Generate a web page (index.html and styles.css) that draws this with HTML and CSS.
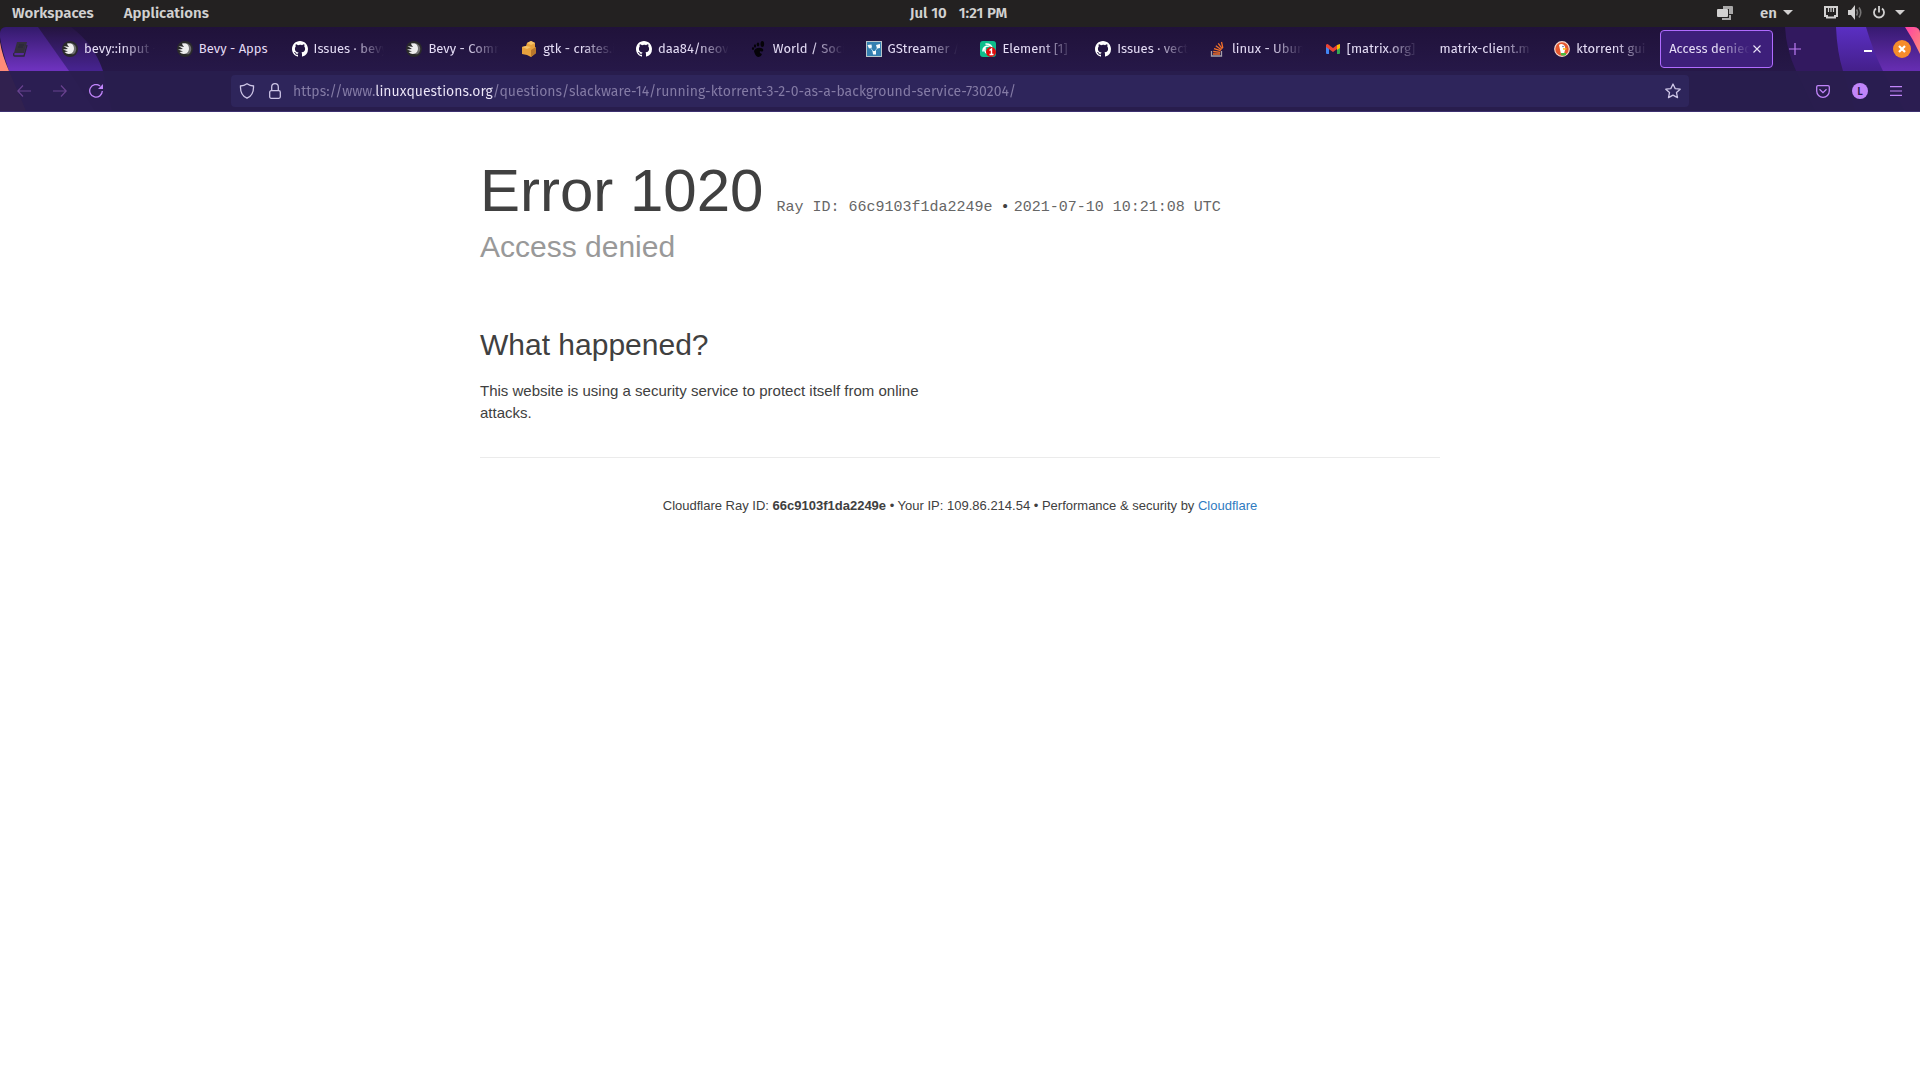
FILE: index.html
```html
<!DOCTYPE html>
<html lang="en">
<head>
<meta charset="utf-8">
<title>Access denied</title>
<link rel="stylesheet" href="styles.css">
</head>
<body>
<div class="shell">
<header class="panel">
  <nav class="panel-start">
    <button class="panel-button">Workspaces</button>
    <button class="panel-button">Applications</button>
  </nav>
  <time class="clock" datetime="2021-07-10T13:21"><span>Jul 10</span><span>1:21 PM</span></time>
  <div class="panel-end">
    <button class="panel-button" aria-label="Tiling">
      <svg width="16" height="14" viewBox="0 0 16 14"><path d="M6 0h9q1 0 1 1v7h-4V3H6zM12 9h2v5H5v-2h7z" fill="#a9a8a8"/><rect x="0" y="3" width="11" height="8" rx="1" fill="#d2d1d1"/></svg>
    </button>
    <button class="panel-button language">en
      <svg width="10" height="6" viewBox="0 0 10 6"><path d="M0 0h10L5 5z" fill="#d2d1d1"/></svg>
    </button>
    <button class="panel-button status" aria-label="System menu">
      <svg width="14" height="13" viewBox="0 0 14 13" fill="none" stroke="#d2d1d1"><path d="M1 1h12v9h-2v1.500H3V10H1z" stroke-width="2"/><path d="M4.500 2v4M7 2v4M9.500 2v4" stroke-width="1.200"/></svg>
      <svg width="15" height="15" viewBox="0 0 15 15"><path d="M0 5h3l4-5v15l-4-5H0z" fill="#d2d1d1"/><path d="M8.500 4.500q2 3 0 6M11 2.500q3.500 5 0 10" fill="none" stroke="#777676" stroke-width="1.600"/></svg>
      <svg width="12" height="13" viewBox="0 0 12 13" fill="none" stroke="#d2d1d1" stroke-width="1.800"><path d="M6 0v6.500M3 2.500a5 5 0 1 0 6 0"/></svg>
      <svg width="10" height="6" viewBox="0 0 10 6"><path d="M0 0h10L5 5z" fill="#d2d1d1"/></svg>
    </button>
  </div>
</header>

<svg class="symbols" aria-hidden="true">
  <symbol id="bevy" viewBox="0 0 16 16"><circle cx="8" cy="8" r="8" fill="#2a2a2b"/><path d="M8 2q4 0 6 4 1 4-2 7-3 1-4-1z" fill="#6f6f70"/><path d="M5 2.500Q10 1.500 11.500 5q1.500 4-1.500 7-4 2.500-7.500-1l3.500-.5-5-2 5-.5-4.500-3L7 6 5.500 4z" fill="#eee"/></symbol>
  <symbol id="github" viewBox="0 0 16 16"><path fill="#fff" d="M8 0C3.580 0 0 3.580 0 8c0 3.540 2.290 6.530 5.470 7.590.4.070.55-.17.55-.38 0-.19-.01-.82-.01-1.490-2.010.37-2.530-.49-2.690-.94-.09-.23-.48-.94-.82-1.130-.28-.15-.68-.52-.01-.53.63-.01 1.080.58 1.230.82.72 1.210 1.870.87 2.330.66.070-.52.28-.87.51-1.070-1.780-.2-3.640-.89-3.640-3.950 0-.87.31-1.590.82-2.150-.08-.2-.36-1.020.08-2.120 0 0 .67-.21 2.200.82A7.600 7.600 0 0 1 8 3.860c.68 0 1.360.09 2 .27 1.530-1.040 2.200-.82 2.200-.82.44 1.100.16 1.920.08 2.120.51.56.82 1.270.82 2.150 0 3.070-1.870 3.750-3.650 3.950.29.25.54.73.54 1.480 0 1.070-.01 1.930-.01 2.200 0 .21.15.46.55.38A8 8 0 0 0 16 8c0-4.420-3.580-8-8-8z"/></symbol>
</svg>

<div class="browser">
  <svg class="theme theme-left" width="140" height="84" viewBox="0 0 140 84" aria-hidden="true">
    <defs>
      <linearGradient id="l1" x1="0" y1="0" x2="0" y2="1"><stop offset="0" stop-color="#331a6b"/><stop offset=".5" stop-color="#6d32bd"/><stop offset="1" stop-color="#6d32bd"/></linearGradient>
      <linearGradient id="l2" x1="0" y1="0" x2="0" y2="1"><stop offset="0" stop-color="#24143f"/><stop offset=".5" stop-color="#46238e"/><stop offset="1" stop-color="#46238e"/></linearGradient>
    </defs>
    <path d="M71 0Q94 17 103 44L112 84H40L0 0z" fill="url(#l2)"/>
    <path d="M0 0H38L69 44 95 84H26L9 44Q2 24 0 10z" fill="url(#l1)"/>
    <path d="M0 15Q2 28 9 44L26 84H0z" fill="#ff8b78"/>
  </svg>
  <svg class="theme theme-right" width="150" height="84" viewBox="0 0 150 84" aria-hidden="true">
    <defs>
      <linearGradient id="r1" x1="0" y1="0" x2="0" y2="1"><stop offset="0" stop-color="#5a2fc3"/><stop offset=".5" stop-color="#45208d"/></linearGradient>
      <linearGradient id="r2" x1="0" y1="0" x2="0" y2="1"><stop offset="0" stop-color="#371a70"/><stop offset=".5" stop-color="#652db0"/></linearGradient>
      <linearGradient id="r3" x1="0" y1="0" x2="1" y2="1"><stop offset="0" stop-color="#ff3fa4"/><stop offset="1" stop-color="#ff8b78"/></linearGradient>
    </defs>
    <path d="M15 0Q16 22 26 44L45 84H150V0z" fill="#32195f"/>
    <path d="M66 0Q67 25 73 44L85 84H150V0z" fill="url(#r1)"/>
    <path d="M96 0Q103 24 113 44L135 84H150V0z" fill="url(#r2)"/>
    <path d="M135 0h15v27Q143 12 135 0z" fill="url(#r3)"/>
  </svg>

  <div class="tabbar">
    <button class="pinned" aria-label="Pinned tab"><svg width="16" height="16" viewBox="0 0 16 16"><path d="M5 1h10l-3 11H2z" fill="#332f3c"/><path d="M2 12q-1 3 1 3h9l3-11M7 4h5M6 6h5" fill="none" stroke="#2b2838" stroke-width="1.300"/></svg></button>
    <div class="tabs">
      <button class="tab"><svg class="favicon"><use href="#bevy"/></svg><span class="label fade">bevy::input -</span></button>
      <button class="tab"><svg class="favicon"><use href="#bevy"/></svg><span class="label">Bevy - Apps</span></button>
      <button class="tab"><svg class="favicon"><use href="#github"/></svg><span class="label fade">Issues · bevy</span></button>
      <button class="tab"><svg class="favicon"><use href="#bevy"/></svg><span class="label fade">Bevy - Comm</span></button>
      <button class="tab"><svg class="favicon" viewBox="0 0 16 16"><path d="M1 6l4-1 1-3 4-2 4 2v4l1 1v5l-5 4-4-2-5-1z" fill="#e7a13d"/><path d="M6 2l4 2 4-2-4-2zM1 6l5 2 4-2-5-1z" fill="#f6c266"/><path d="M10 9l5-3v6l-5 4z" fill="#b9772b"/></svg><span class="label fade">gtk - crates.i</span></button>
      <button class="tab"><svg class="favicon"><use href="#github"/></svg><span class="label fade">daa84/neov</span></button>
      <button class="tab"><svg class="favicon" viewBox="0 0 16 16" fill="#050308"><ellipse cx="11.300" cy="3" rx="1.800" ry="3"/><ellipse cx="7" cy="3.500" rx="1.300" ry="2"/><ellipse cx="4" cy="5" rx="1.100" ry="1.700"/><ellipse cx="2" cy="7.500" rx="1" ry="1.500"/><path d="M3 10q2-4 7-3 3 1 2 3-1 1-3 0-1 2 2 3-1 3-4 3-3-1-4-6z"/></svg><span class="label fade">World / Soci</span></button>
      <button class="tab"><svg class="favicon" viewBox="0 0 16 16"><rect x=".5" y=".5" width="15" height="15" fill="#337fb0" stroke="#b9c4c8"/><path d="M3.500 5.500L8 11.500l4.500-6" fill="none" stroke="#a8d2e8"/><path d="M1.500 4l4-.5.500 3-3 1zM10 4l4-1v4l-3 .5zM6.500 10h3.500v3.500H7z" fill="#f4fafc"/></svg><span class="label fade">GStreamer /</span></button>
      <button class="tab"><svg class="favicon" viewBox="0 0 16 16"><rect width="16" height="16" rx="3" fill="#0dbd8b"/><path d="M6 3q6 0 6 5M3 10q0-5 6-5M10 13q-6 0-5-6" fill="none" stroke="#fff" stroke-width="1.600" stroke-linecap="round"/><circle cx="11" cy="11" r="5" fill="#e00b0b"/><path d="M9.500 9.500l2-1.500v5.500M9.500 13.500h4" fill="none" stroke="#fff" stroke-width="1.400"/></svg><span class="label fade">Element [1]</span></button>
      <button class="tab"><svg class="favicon"><use href="#github"/></svg><span class="label fade">Issues · vect</span></button>
      <button class="tab"><svg class="favicon" viewBox="0 0 16 16"><path d="M1.500 10v5h10v-5" fill="none" stroke="#a6a1ab" stroke-width="1.300"/><path d="M3 13h7M3.200 10.500l7 .8M4 7.700l6.600 2M5.800 4.800l5.600 4M8.300 2.300l4 5.700M11.500 1l1.300 6" fill="none" stroke="#f2702a" stroke-width="1.300"/></svg><span class="label fade">linux - Ubun</span></button>
      <button class="tab"><svg class="favicon" viewBox="0 0 16 16"><path d="M1 4h3v9H2q-1 0-1-1z" fill="#4285f4"/><path d="M12 6h3v6q0 1-1 1h-2z" fill="#34a853"/><path d="M12 4l3-1v4l-3 2z" fill="#fbbc04"/><path d="M1 4q1-2 3 0l4 3 4-3v4l-4 3-7-5z" fill="#ea4335"/></svg><span class="label fade">[matrix.org]</span></button>
      <button class="tab"><span class="label fade">matrix-client.m</span></button>
      <button class="tab"><svg class="favicon" viewBox="0 0 16 16"><circle cx="8" cy="8" r="7.300" fill="#e4572e" stroke="#f5d8ce" stroke-width="1.200"/><path d="M5 4q2-2 5 0 2 2 1 5l-1 4H7z" fill="#fff"/><path d="M9 7l4 .5-1 1.300H9z" fill="#fcc21b"/><path d="M7 12h5v2q-3 1-5 0z" fill="#4cba3c"/><circle cx="9" cy="5.500" r=".7" fill="#2d4f8e"/></svg><span class="label fade">ktorrent gui</span></button>
      <button class="tab active"><span class="label fade">Access denied</span><svg class="tab-close" width="8" height="8" viewBox="0 0 8 8"><path d="M.5.5l7 7m0-7l-7 7" stroke="#e9e3f7" stroke-width="1.100"/></svg></button>
    </div>
    <button class="new-tab" aria-label="New tab"><svg width="12" height="12" viewBox="0 0 12 12"><path d="M6 0v12M0 6h12" stroke="#bd7cf5" stroke-width="1.200"/></svg></button>
    <div class="window-buttons">
      <button class="minimize" aria-label="Minimize"><svg width="8" height="6" viewBox="0 0 8 6"><path d="M0 4h8v2H0z" fill="#fff"/></svg></button>
      <button class="window-close" aria-label="Close"><svg width="8" height="8" viewBox="0 0 8 8"><path d="M1 1l6 6m0-6L1 7" stroke="#fff" stroke-width="2.200"/></svg></button>
    </div>
  </div>

  <div class="toolbar">
    <div class="nav-buttons">
      <button aria-label="Back"><svg width="14" height="12" viewBox="0 0 14 12"><path d="M14 6H1M6 .5L.8 6 6 11.500" fill="none" stroke="#69428f" stroke-width="1.200"/></svg></button>
      <button aria-label="Forward"><svg width="14" height="12" viewBox="0 0 14 12"><path d="M0 6h13M8 .5L13.200 6 8 11.500" fill="none" stroke="#69428f" stroke-width="1.200"/></svg></button>
      <button aria-label="Reload"><svg width="14" height="14" viewBox="0 0 14 14"><path d="M11 2A6.300 6.300 0 1 0 13.300 7" fill="none" stroke="#c185fa" stroke-width="1.300"/><path d="M14 0v5H9z" fill="#c185fa"/></svg></button>
    </div>
    <div class="urlbar">
      <div class="site-icons">
        <svg width="16" height="16" viewBox="0 0 16 16"><path d="M8 .8q3 2.200 6.500 2.200Q15 12 8 15.200 1 12 1.500 3 5 3 8 .8z" fill="none" stroke="#cdc5e6" stroke-width="1.300"/></svg>
        <svg width="12" height="16" viewBox="0 0 12 16"><rect x=".7" y="7.700" width="10.600" height="7.600" rx="1.500" fill="none" stroke="#cdc5e6" stroke-width="1.300"/><path d="M2.700 7.500V4a3.300 3.300 0 0 1 6.600 0v3.500" fill="none" stroke="#cdc5e6" stroke-width="1.300"/></svg>
      </div>
      <input class="url" type="text" aria-label="Address" value="https://www.linuxquestions.org/questions/slackware-14/running-ktorrent-3-2-0-as-a-background-service-730204/">
      <svg width="16" height="16" viewBox="0 0 16 16"><path d="M8 1l2.200 4.600 5 .6-3.700 3.400 1 5L8 12.100l-4.500 2.500 1-5L.8 6.200l5-.6z" fill="none" stroke="#cdc5e6" stroke-width="1.300" stroke-linejoin="round"/></svg>
    </div>
    <div class="tools">
      <button aria-label="Pocket"><svg width="14" height="13" viewBox="0 0 14 13"><path d="M2 .7h10q1.300 0 1.300 1.300v4a6.300 6.300 0 0 1-12.600 0V2Q.7.7 2 .7zM3.500 4.300L7 7.600l3.500-3.300" fill="none" stroke="#c185fa" stroke-width="1.300"/></svg></button>
      <button class="account">L</button>
      <button aria-label="Menu"><svg width="12" height="10" viewBox="0 0 12 10"><path d="M0 .6h12M0 5h12M0 9.400h12" stroke="#c185fa" stroke-width="1.200"/></svg></button>
    </div>
  </div>
</div>
</div>

<main class="page">
  <h1 class="code">Error 1020 <small class="ray">Ray ID: 66c9103f1da2249e</small> <span class="dot">•</span> <small>2021-07-10 10:21:08 UTC</small></h1>
  <h2 class="reason">Access denied</h2>
  <section class="what">
    <h2>What happened?</h2>
    <p>This website is using a security service to protect itself from online attacks.</p>
  </section>
  <footer class="foot">Cloudflare Ray ID: <strong>66c9103f1da2249e</strong> • Your IP: 109.86.214.54 • Performance &amp; security by <a href="#">Cloudflare</a></footer>
</main>
</body>
</html>
```
FILE: styles.css
```css
* { box-sizing: border-box; }
body {
  margin: 0;
  background: #fff;
  color: #404040;
  font: 15px/22px "Liberation Sans", Arial, sans-serif;
}
button {
  display: flex;
  align-items: center;
  justify-content: center;
  margin: 0;
  padding: 0;
  border: 0;
  background: none;
  color: inherit;
  font: inherit;
}
svg { flex: none; }
.symbols { display: none; }
.shell { background: #232121; }

/* Desktop panel */
.panel {
  display: grid;
  grid-template-columns: 1fr auto 1fr;
  align-items: center;
  height: 27px;
  padding: 0 15px 2px 12px;
  color: #d2d1d1;
  font: 600 15px/24px "Fira Sans", "Noto Sans", sans-serif;
}
.panel-start { display: flex; gap: 30px; }
.clock { display: flex; gap: 12px; }
.panel-end { display: flex; justify-content: flex-end; gap: 27px; }
.language { gap: 6px; }
.status { gap: 10px; margin-left: 4px; }

/* Browser chrome */
.browser {
  position: relative;
  overflow: hidden;
  border-radius: 6px 6px 0 0;
  background: linear-gradient(#20123a, #261848 44px);
  color: #e4dcf5;
  font: 14px/20px "Fira Sans", "Noto Sans", sans-serif;
}
.theme { position: absolute; top: 0; }
.theme-left { left: 0; }
.theme-right { right: 0; }
.tabbar {
  position: relative;
  display: flex;
  height: 44px;
  font-size: 13px;
}
.pinned { width: 40px; margin-right: 12px; }
.tabs { display: flex; flex: 1; min-width: 0; }
.tab {
  flex: 1;
  justify-content: flex-start;
  gap: 6px;
  min-width: 0;
  margin: 3px 1px;
  padding: 0 9px;
  border-radius: 4px;
}
.tab.active {
  gap: 1px;
  padding: 0 8px;
  border: 1px solid #b06bff;
  background: #3d1f7a;
}
.favicon { width: 16px; height: 16px; }
.tab-close { margin-right: 3px; }
.label {
  flex: 1;
  min-width: 0;
  overflow: hidden;
  text-align: left;
  white-space: nowrap;
}
.fade { mask-image: linear-gradient(to left, transparent 2px, #000 34px); }
.new-tab { width: 42px; }
.window-buttons {
  display: flex;
  align-items: center;
  gap: 21px;
  margin-left: 48px;
  padding-right: 9px;
}
.window-close {
  width: 18px;
  height: 18px;
  border-radius: 50%;
  background: #f68c2b;
}

.toolbar {
  position: relative;
  display: flex;
  align-items: center;
  height: 41px;
  padding: 0 18px 0 17px;
  border-bottom: 1px solid #3d3170;
  background: rgb(41 29 77 / 96%);
}
.nav-buttons { display: flex; align-items: center; gap: 22px; width: 214px; }
.urlbar {
  display: flex;
  flex: 1;
  align-items: center;
  gap: 12px;
  max-width: 1458px;
  height: 32px;
  padding: 0 8px;
  border-radius: 4px;
  background: #2e255b;
}
.site-icons { display: flex; gap: 14px; }
.url {
  flex: 1;
  min-width: 0;
  height: 24px;
  padding: 0;
  border: 0;
  outline: 0;
  background: linear-gradient(to right, #857ca6 82px, #efe9fb 82px 200px, #857ca6 200px);
  -webkit-background-clip: text;
  background-clip: text;
  color: transparent;
  font: inherit;
}
.tools { display: flex; align-items: center; gap: 22px; margin-left: auto; }
.account {
  width: 16px;
  height: 16px;
  border-radius: 50%;
  background: #c185fa;
  color: #2a1d4e;
  font: bold 10px/16px "Noto Sans", sans-serif;
}

/* Error page */
.page { max-width: 960px; margin: 0 auto; }
h1, h2, p { margin: 0; font-weight: 400; }
.code {
  display: flex;
  align-items: baseline;
  padding-top: 43px;
  font-size: 60px;
  line-height: 72px;
}
.code small {
  color: #666;
  font: 15px/22px "Nimbus Mono PS", "Liberation Mono", monospace;
}
.code .ray { margin-left: 13px; }
.dot { margin: 0 6px 0 10px; font-size: 15px; line-height: 22px; }
.reason { color: #999; font-size: 30px; line-height: 39px; }
.what { padding: 59px 0 33px; border-bottom: 1px solid #ebebeb; }
.what h2 { margin-bottom: 16px; font-size: 30px; line-height: 39px; }
.what p { max-width: 460px; }
.foot { padding: 36px 0; font-size: 13px; line-height: 24px; text-align: center; }
.foot a { color: #2f7bbf; text-decoration: none; }
```
